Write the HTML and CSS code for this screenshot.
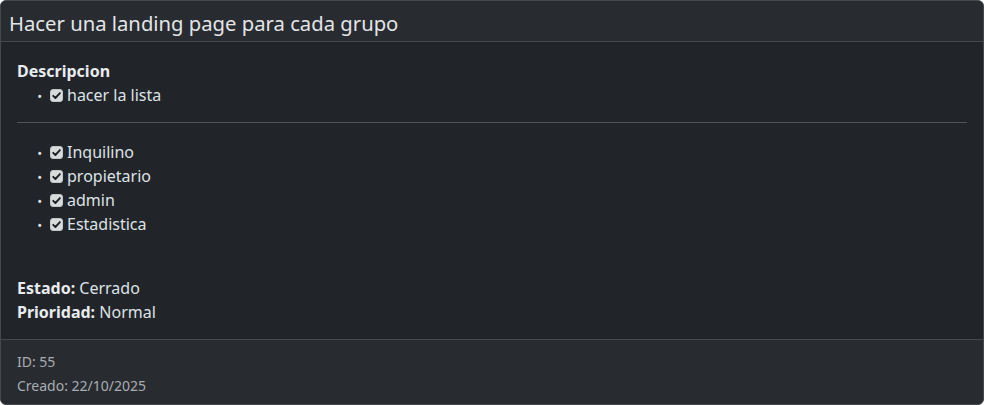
FILE: index.html
```html
<!DOCTYPE html>
<html lang="es">
<head>
<meta charset="utf-8">
<title>Tarea</title>
<link rel="stylesheet" href="styles.css">
</head>
<body>
<div class="card">
  <div class="card-header">
    <h5 class="card-title">Hacer una landing page para cada grupo</h5>
  </div>
  <div class="card-body">
    <div class="section-label"><strong>Descripcion</strong></div>
    <ul class="checklist">
      <li><span class="check"><svg viewBox="0 0 13 13" width="13" height="13"><rect x="0.5" y="0.5" width="12" height="12" rx="2.5" fill="#d9dadb" stroke="#c4c6c8"/><path d="M3.2 6.8 L5.4 9 L9.9 4.1" fill="none" stroke="#1f2226" stroke-width="1.9" stroke-linecap="round" stroke-linejoin="round"/></svg></span>hacer la lista</li>
    </ul>
    <hr class="divider">
    <ul class="checklist">
      <li><span class="check"><svg viewBox="0 0 13 13" width="13" height="13"><rect x="0.5" y="0.5" width="12" height="12" rx="2.5" fill="#d9dadb" stroke="#c4c6c8"/><path d="M3.2 6.8 L5.4 9 L9.9 4.1" fill="none" stroke="#1f2226" stroke-width="1.9" stroke-linecap="round" stroke-linejoin="round"/></svg></span>Inquilino</li>
      <li><span class="check"><svg viewBox="0 0 13 13" width="13" height="13"><rect x="0.5" y="0.5" width="12" height="12" rx="2.5" fill="#d9dadb" stroke="#c4c6c8"/><path d="M3.2 6.8 L5.4 9 L9.9 4.1" fill="none" stroke="#1f2226" stroke-width="1.9" stroke-linecap="round" stroke-linejoin="round"/></svg></span>propietario</li>
      <li><span class="check"><svg viewBox="0 0 13 13" width="13" height="13"><rect x="0.5" y="0.5" width="12" height="12" rx="2.5" fill="#d9dadb" stroke="#c4c6c8"/><path d="M3.2 6.8 L5.4 9 L9.9 4.1" fill="none" stroke="#1f2226" stroke-width="1.9" stroke-linecap="round" stroke-linejoin="round"/></svg></span>admin</li>
      <li><span class="check"><svg viewBox="0 0 13 13" width="13" height="13"><rect x="0.5" y="0.5" width="12" height="12" rx="2.5" fill="#d9dadb" stroke="#c4c6c8"/><path d="M3.2 6.8 L5.4 9 L9.9 4.1" fill="none" stroke="#1f2226" stroke-width="1.9" stroke-linecap="round" stroke-linejoin="round"/></svg></span>Estadistica</li>
    </ul>
    <div class="spacer"></div>
    <div class="meta"><strong>Estado:</strong> Cerrado</div>
    <div class="meta"><strong>Prioridad:</strong> Normal</div>
  </div>
  <div class="card-footer">
    <div class="small-text">ID: 55</div>
    <div class="small-text">Creado: 22/10/2025</div>
  </div>
</div>
</body>
</html>
```
FILE: styles.css
```css
* { box-sizing: border-box; }
html, body {
  margin: 0;
  padding: 0;
  background: #ffffff;
}
body {
  font-family: "Noto Sans", "DejaVu Sans", sans-serif;
  font-size: 16px;
  line-height: 1.5;
  color: #dee2e6;
}
.card {
  width: 984px;
  background: #212529;
  border: 1px solid #45494e;
  border-radius: 6px;
  overflow: hidden;
}
.card-header {
  background: #282b30;
  border-bottom: 1px solid #45494e;
  padding: 10px 8px 6px;
}
.card-title {
  margin: 0;
  font-size: 20.25px;
  font-weight: 400;
  line-height: 24px;
  color: #e3e5e8;
}
.card-body {
  padding: 17px 16px 15px;
}
.section-label strong,
.meta strong {
  font-weight: 700;
  color: #e9ecef;
}
.checklist {
  margin: 0;
  padding-left: 32px;
}
.checklist li::marker {
  content: "\2022\00a0\00a0";
  font-size: 13px;
}
.check {
  display: inline-block;
  width: 13px;
  height: 13px;
  margin: 0 4px 0 1px;
  vertical-align: -1px;
}
.check svg { display: block; }
.divider {
  margin: 15px 0 17px;
  border: 0;
  border-top: 1px solid #505458;
}
.spacer {
  height: 40px;
}
.card-footer {
  background: #282b30;
  border-top: 1px solid #45494e;
  padding: 10px 16px 6px;
}
.small-text {
  font-size: 14px;
  line-height: 24px;
  color: #a9adb2;
}
```
